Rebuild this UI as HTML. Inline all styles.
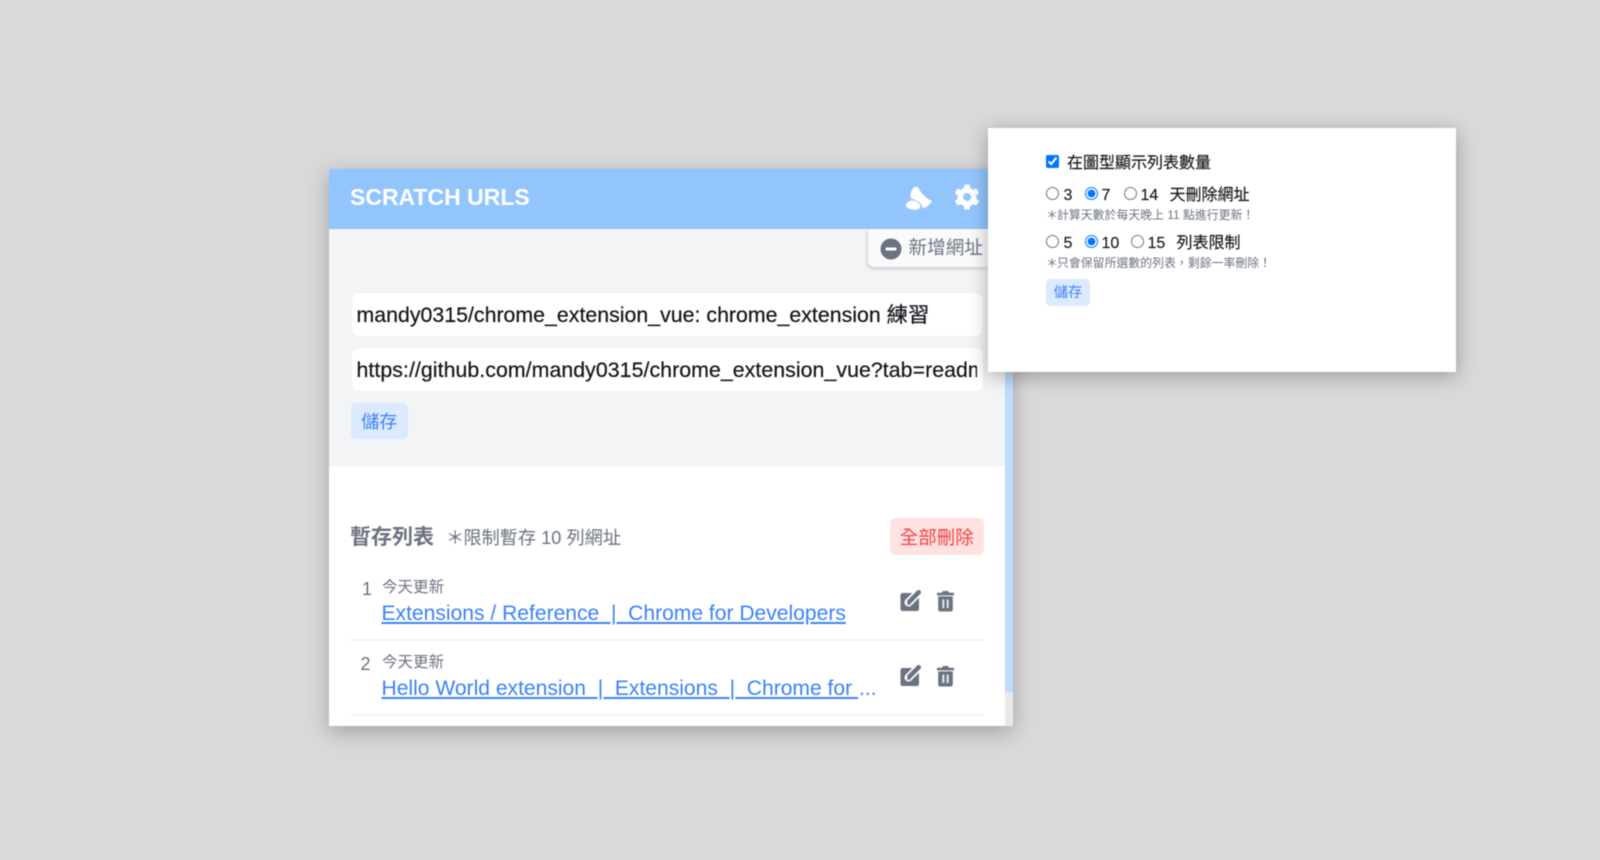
<!DOCTYPE html>
<html lang="zh-Hant"><head><meta charset="utf-8"><title>Scratch URLs</title>
<style>
html,body{margin:0;padding:0;width:1600px;height:860px;overflow:hidden;background:#d9d9d9}
body{position:relative;font-family:"Liberation Sans","Noto Sans CJK TC",sans-serif;color:#1f2228}
.a{position:absolute;white-space:nowrap}
#wrap{position:absolute;left:0;top:0;width:1600px;height:860px;filter:blur(.45px)}
.panel{left:329px;top:169px;width:684px;height:557px;background:#fff;box-shadow:0 6px 20px rgba(0,0,0,.26)}
.gray{left:329px;top:229px;width:676px;height:236.5px;background:#f3f4f6}
.hdr{left:329px;top:169px;width:684px;height:60px;background:#93c5fd}
.inp{background:#fff;border-radius:7px;height:43px;line-height:45px;left:351.5px;width:631.5px;box-shadow:0 0 2px rgba(0,0,0,.06);font-size:21.3px;color:#111318;overflow:hidden;padding-left:5px;box-sizing:border-box;-webkit-text-stroke:.2px #111318}
.btn{background:#dbeafe;color:#3b82f6;border-radius:5px;text-align:center}
.gt{color:#6b7280}
.lnk{color:#3b82f6;text-decoration:underline;font-size:21.07px;line-height:26px;left:381.5px}
.ln{left:350.5px;width:633.5px;height:2px;background:#f0f1f3}
input{position:absolute;margin:0;width:13px;height:13px}
.pop{left:988px;top:128px;width:468px;height:244px;background:#fff;box-shadow:0 4px 18px rgba(0,0,0,.3)}
.t16{font-size:16px;line-height:20px;color:#15171b;-webkit-text-stroke:.15px #15171b}
.note{font-size:11.9px;line-height:16px;color:#6b7280}
.st{letter-spacing:-.9px}
</style></head><body>
<div id="wrap">
<div class="a panel"></div>
<div class="a gray"></div>
<div class="a" style="left:1005px;top:372px;width:8px;height:320px;background:#bfdbfe"></div>
<div class="a" style="left:1005px;top:692px;width:8px;height:34px;background:#e8e8e8"></div>
<div class="a hdr"></div>
<div class="a" style="left:350px;top:183px;font-size:23px;font-weight:bold;line-height:28px;color:#fff">SCRATCH URLS</div>

<svg class="a" style="left:901px;top:180px" width="40" height="36" viewBox="0 0 40 36">
<path fill="#fff" d="M13 7.500 C15 6 17 7 18 9 C20 13 25 18.500 31 21 C29 25 25 27.500 22 28.500 C21 24.500 18 20.500 10 18.500 C9 14 10 10 13 7.500Z"/>
<ellipse cx="11.500" cy="25" rx="6.500" ry="4.500" fill="#fff"/>
<ellipse cx="14" cy="26" rx="5.500" ry="3.800" fill="#fff"/>
</svg>

<svg class="a" style="left:953px;top:183px" width="28" height="28" viewBox="-14 -14 28 28">
<g fill="#fff">
<circle r="9.500"/>
<rect x="-3" y="-12.500" width="6" height="25" rx="1.200"/>
<rect x="-3" y="-12.500" width="6" height="25" rx="1.200" transform="rotate(60)"/>
<rect x="-3" y="-12.500" width="6" height="25" rx="1.200" transform="rotate(120)"/>
</g>
<circle r="4" fill="#93c5fd"/>
</svg>

<div class="a" style="left:868px;top:229px;width:120px;height:38px;background:#fafafb;border-radius:0 0 0 6px;box-shadow:-1px 2px 3px rgba(0,0,0,.16)"></div>
<svg class="a" style="left:880px;top:238px" width="22" height="22" viewBox="0 0 22 22"><circle cx="11" cy="11" r="10.500" fill="#6b7280"/><rect x="5.500" y="9.500" width="11" height="3" rx="1" fill="#fff"/></svg>
<div class="a gt" style="left:908.5px;top:236px;font-size:18.600px;line-height:24px">新增網址</div>

<div class="a inp" style="top:293px;letter-spacing:.02px">mandy0315/chrome_extension_vue: chrome_extension 練習</div>
<div class="a inp" style="top:348px"><div style="width:620px;overflow:hidden;letter-spacing:.06px">https://github.com/mandy0315/chrome_extension_vue?tab=readme</div></div>
<div class="a btn" style="left:350.5px;top:403px;width:57.5px;height:36px;line-height:38px;font-size:18px">儲存</div>

<div class="a gt" style="left:350px;top:525px;font-size:21px;line-height:26px;font-weight:bold">暫存列表</div>
<div class="a gt" style="left:446px;top:526px;font-size:18.200px;line-height:24px"><span style="letter-spacing:-.8px">＊</span>限制暫存 10 列網址</div>
<div class="a" style="left:889.5px;top:518px;width:94.5px;height:37px;line-height:39px;background:#fee2e2;color:#ef4444;border-radius:6px;text-align:center;font-size:18.500px">全部刪除</div>

<div class="a gt" style="left:362px;top:578px;font-size:18px;line-height:22px">1</div>
<div class="a gt" style="left:382px;top:577.500px;font-size:15.500px;line-height:20px">今天更新</div>
<div class="a lnk" style="top:601px">Extensions / Reference &nbsp;|&nbsp; Chrome for Developers</div>
<div class="a ln" style="top:638.500px"></div>

<div class="a gt" style="left:360.500px;top:653px;font-size:18px;line-height:22px">2</div>
<div class="a gt" style="left:382px;top:652.500px;font-size:15.500px;line-height:20px">今天更新</div>
<div class="a lnk" style="top:676px">Hello World extension &nbsp;|&nbsp; Extensions &nbsp;|&nbsp; Chrome for&nbsp;</div>
<div class="a" style="left:859px;top:676px;font-size:21.07px;line-height:26px;color:#3b82f6">...</div>
<div class="a ln" style="top:713.500px"></div>

<svg class="a" style="left:900px;top:589px" width="22" height="23" viewBox="0 0 22 23">
<path fill="#6b7280" d="M2.500 4 H19 V20 C19 21 18 22 17 22 H2.500 C1.500 22 0.500 21 0.500 20 V6 C0.500 4.800 1.500 4 2.500 4Z"/>
<path d="M18.500 3.500 L8.500 13.500" stroke="#fff" stroke-width="8" stroke-linecap="round"/>
<path d="M18.700 3.300 L9.500 12.500" stroke="#6b7280" stroke-width="4.600" stroke-linecap="round"/>
<path d="M7 16 L7.800 12 L11 15.200Z" fill="#6b7280"/>
</svg>
<svg class="a" style="left:935.500px;top:590px" width="19" height="22" viewBox="0 0 19 22">
<path fill="#6b7280" d="M1 2.800 H6 L7 1 H12 L13 2.800 H18 V5.400 H1Z M2.200 6.400 H16.800 V19.500 C16.800 20.800 16 21.500 14.800 21.500 H4.200 C3 21.500 2.200 20.800 2.200 19.500Z"/>
<rect x="6.300" y="9.500" width="2" height="8.500" fill="#e8eaee"/><rect x="10.700" y="9.500" width="2" height="8.500" fill="#e8eaee"/>
</svg>
<svg class="a" style="left:900px;top:664px" width="22" height="23" viewBox="0 0 22 23">
<path fill="#6b7280" d="M2.500 4 H19 V20 C19 21 18 22 17 22 H2.500 C1.500 22 0.500 21 0.500 20 V6 C0.500 4.800 1.500 4 2.500 4Z"/>
<path d="M18.500 3.500 L8.500 13.500" stroke="#fff" stroke-width="8" stroke-linecap="round"/>
<path d="M18.700 3.300 L9.500 12.500" stroke="#6b7280" stroke-width="4.600" stroke-linecap="round"/>
<path d="M7 16 L7.800 12 L11 15.200Z" fill="#6b7280"/>
</svg>
<svg class="a" style="left:935.500px;top:665px" width="19" height="22" viewBox="0 0 19 22">
<path fill="#6b7280" d="M1 2.800 H6 L7 1 H12 L13 2.800 H18 V5.400 H1Z M2.200 6.400 H16.800 V19.500 C16.800 20.800 16 21.500 14.800 21.500 H4.200 C3 21.500 2.200 20.800 2.200 19.500Z"/>
<rect x="6.300" y="9.500" width="2" height="8.500" fill="#e8eaee"/><rect x="10.700" y="9.500" width="2" height="8.500" fill="#e8eaee"/>
</svg>

<div class="a pop"></div>
<input type="checkbox" checked style="left:1046px;top:155px">
<div class="a t16" style="left:1067px;top:154px">在圖型顯示列表數量</div>

<input type="radio" style="left:1046px;top:187px">
<div class="a t16" style="left:1063.500px;top:185.500px">3</div>
<input type="radio" checked style="left:1085px;top:187px">
<div class="a t16" style="left:1101.500px;top:185.500px">7</div>
<input type="radio" style="left:1123.500px;top:187px">
<div class="a t16" style="left:1140.500px;top:185.500px">14</div>
<div class="a t16" style="left:1169.500px;top:185.500px">天刪除網址</div>
<div class="a note" style="left:1046px;top:207px"><span class="st">＊</span>計算天數於每天晚上 11 點進行更新！</div>

<input type="radio" style="left:1046px;top:235px">
<div class="a t16" style="left:1063.500px;top:233.500px">5</div>
<input type="radio" checked style="left:1085px;top:235px">
<div class="a t16" style="left:1101.500px;top:233.500px">10</div>
<input type="radio" style="left:1130.500px;top:235px">
<div class="a t16" style="left:1147.500px;top:233.500px">15</div>
<div class="a t16" style="left:1176.500px;top:233.500px">列表限制</div>
<div class="a note" style="left:1046px;top:255px"><span class="st">＊</span>只會保留所選數的列表，剩餘一率刪除！</div>

<div class="a btn" style="left:1046px;top:279px;width:44px;height:27px;line-height:29px;font-size:14.200px">儲存</div>
</div>
</body></html>
